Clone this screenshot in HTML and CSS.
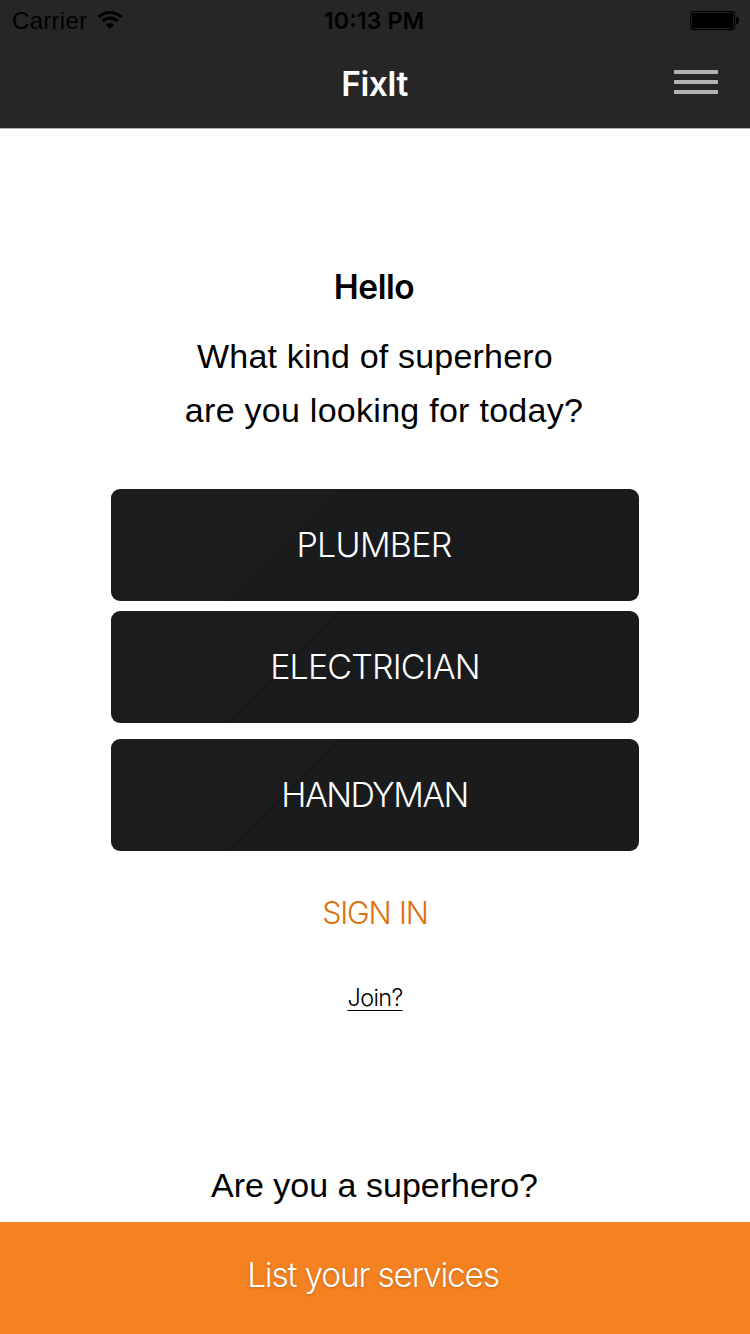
FILE: index.html
```html
<!DOCTYPE html>
<html lang="en">
<head>
<meta charset="utf-8">
<title>FixIt</title>
<link rel="stylesheet" href="styles.css">
</head>
<body>
<header class="top">
  <div class="status">
    <div class="network"><span class="carrier">Carrier</span>
      <svg class="wifi" width="26" height="20" viewBox="0 0 26 20"><g fill="none" stroke="#000" stroke-width="3.1"><path d="M1.700 7.100a16 16 0 0 1 22.600 0"/><path d="M5.600 11.200a10.400 10.400 0 0 1 14.800 0"/></g><path d="M13 19l-4.200-4.300a6 6 0 0 1 8.400 0z"/></svg>
    </div>
    <span class="clock">10:13 PM</span>
    <svg class="battery" width="50" height="20" viewBox="0 0 50 20"><rect x=".6" y=".6" width="44" height="18" rx="3" fill="none" stroke="#000" stroke-width="1.1"/><rect x="2" y="2" width="41.300" height="15.200" rx="1.500"/><path d="M46 6h1.500q1.500 1 1.500 3.500t-1.500 3.500H46z"/></svg>
  </div>
  <div class="nav"><h1 class="title">FixIt</h1>
    <div class="menu"><i></i><i></i><i></i></div>
  </div>
</header>
<main class="main">
  <h2 class="hello">Hello</h2>
  <p class="question"><span class="q1">What kind of superhero</span><span class="q2">are you looking for today?</span></p>
  <div class="services">
    <button class="service plumber">PLUMBER</button>
    <button class="service electrician">ELECTRICIAN</button>
    <button class="service handyman">HANDYMAN</button>
  </div>
  <a class="signin">SIGN IN</a>
  <a class="join">Join?</a>
  <p class="prompt">Are you a superhero?</p>
</main>
<footer class="footer"><span class="list">List your services</span></footer>
</body>
</html>
```

FILE: styles.css
```css
* { box-sizing: border-box; }
body { margin: 0; width: 750px; height: 1334px; display: flex; flex-direction: column; background: #fff; color: #000; font-family: "Liberation Sans", Arial, sans-serif; overflow: hidden; }
h1, h2, p { margin: 0; font-weight: 400; }
.top { height: 129px; background: #262626; border-bottom: 1px solid #b0b0b0; flex: none; }
.status { height: 40px; display: grid; grid-template-columns: 1fr auto 1fr; align-items: center; padding: 1px 10px 0 12px; }
.network { display: flex; align-items: center; gap: 10px; }
.wifi { margin-top: -2px; }
.battery { justify-self: end; }
.carrier { font-size: 24px; line-height: 40px; letter-spacing: .3px; }
.clock { font-family: Inter, sans-serif; font-weight: 600; font-size: 23.500px; line-height: 40px; padding-right: 4px; }
.nav { height: 88px; display: grid; grid-template-columns: 1fr auto 1fr; align-items: center; padding: 0 32px; }
.title { grid-column: 2; font-family: Inter, sans-serif; font-weight: 600; font-size: 33.500px; line-height: 88px; letter-spacing: -.55px; padding-right: 1px; color: #fff; }
.menu { justify-self: end; display: grid; gap: 6px; margin-top: -4px; }
.menu i { width: 44px; height: 4px; background: #b2b2b2; }
.main { flex: 1; display: flex; flex-direction: column; align-items: center; padding-top: 131px; }
.hello { font-family: Inter, sans-serif; font-weight: 600; font-size: 33.500px; line-height: 54px; letter-spacing: -.45px; padding-right: 2px; }
.question { display: flex; flex-direction: column; align-items: center; padding-top: 15px; font-size: 34px; line-height: 54px; }
.q1 { letter-spacing: .2px; }
.q2 { padding-left: 18px; letter-spacing: .27px; }
.services { display: grid; padding-top: 52px; }
.service { width: 528px; height: 112px; margin: 0 0 10px; padding: 0; border: 0; border-radius: 9px; background: linear-gradient(135deg, #1c1c1c 0 35.600%, #141515 35.750% 35.900%, #191b1c 36.100%); color: #fff; font: 300 34px/112px Inter, sans-serif; }
.plumber { letter-spacing: -.7px; padding-right: 2px; }
.electrician { letter-spacing: -.85px; }
.handyman { margin: 6px 0 0; letter-spacing: -1.600px; padding-right: 1px; }
.signin { padding-top: 35px; font: 300 30.500px/54px Inter, sans-serif; letter-spacing: -1.280px; word-spacing: 1.500px; color: #de6f0c; }
.join { margin-top: 41px; font: 300 23.500px/34px Inter, sans-serif; letter-spacing: -.65px; text-decoration: underline; text-decoration-thickness: 1px; text-underline-offset: 4px; }
.prompt { margin-top: auto; font-size: 34px; line-height: 54px; padding: 0 1px 10px 0; }
.footer { height: 112px; display: flex; justify-content: center; background: #f58220; flex: none; }
.list { font: 300 33.500px/106px Inter, sans-serif; letter-spacing: -1.220px; padding-right: 4px; color: #fff; text-shadow: 0 1px 3px rgba(0,0,0,.2); }
```
